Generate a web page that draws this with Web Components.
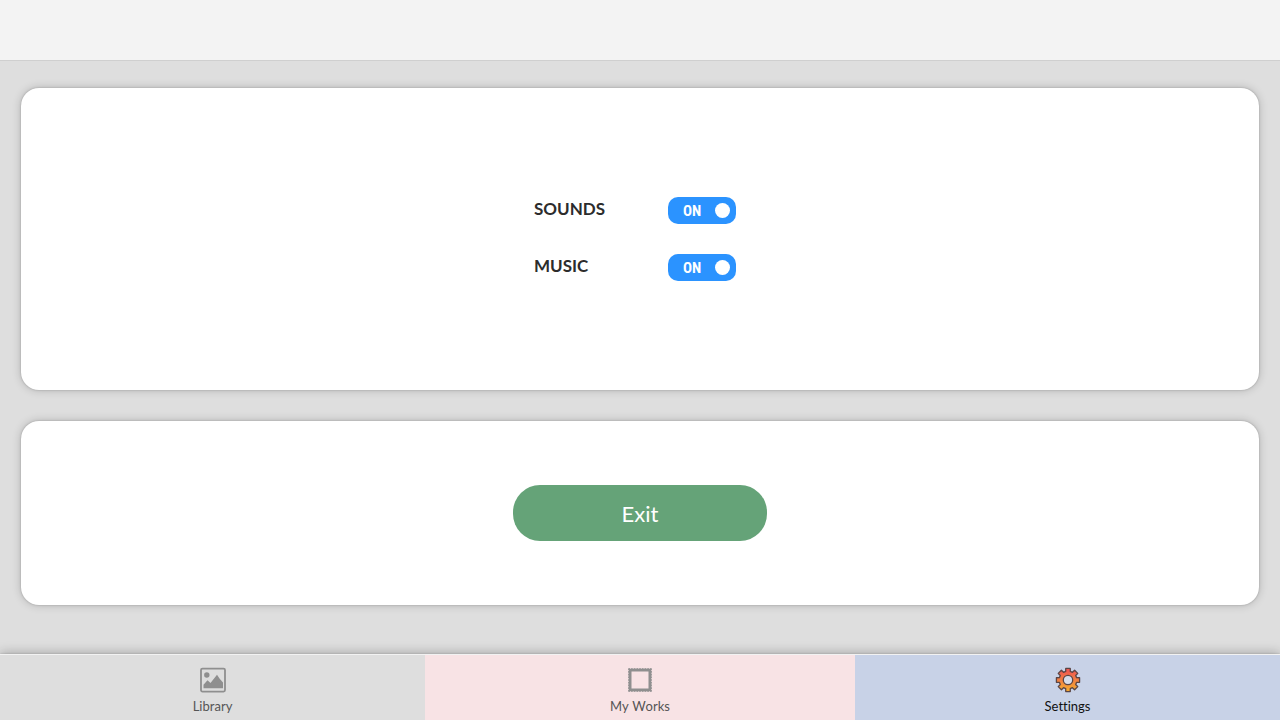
<!DOCTYPE html>
<html lang="en">
<head>
<meta charset="utf-8">
<meta name="viewport" content="width=device-width, initial-scale=1">
<title>Settings</title>
<style>
body { margin: 0; font-family: Lato, "Noto Sans", sans-serif; }
</style>
</head>
<body>
<settings-app></settings-app>
<script>
const attach = (el, html) => {
  const template = document.createElement('template');
  template.innerHTML = html;
  el.attachShadow({ mode: 'open' }).append(template.content.cloneNode(true));
};

// Outline of an eight-toothed cog centred on the origin.
const cogPath = () => {
  const profile = [[-15, 8.9], [-11, 11.8], [11, 11.8], [15, 8.9]];
  const points = [];
  for (let tooth = 0; tooth < 8; tooth++) {
    for (const [offset, radius] of profile) {
      const a = (tooth * 45 + offset - 90) * Math.PI / 180;
      points.push((Math.cos(a) * radius).toFixed(2) + ' ' + (Math.sin(a) * radius).toFixed(2));
    }
  }
  return 'M' + points.join('L') + 'Z';
};

const icons = {
  library: `<svg viewBox="0 0 26 26" aria-hidden="true">
    <rect x="1" y="1.6" width="24" height="23" rx="1.5" fill="none" stroke="#8f8f8f" stroke-width="1.8"/>
    <circle cx="6.8" cy="8" r="2.7" fill="#8f8f8f"/>
    <path d="M3.5 21.3v-3.5l4-4.5 3 2.8 6.5-8.3 2.7 4 3.3 3.8v5.7z" fill="#8f8f8f"/></svg>`,
  works: `<svg viewBox="0 0 26 26" aria-hidden="true">
    <rect x="3.1" y="3.1" width="19.8" height="19.8" fill="none" stroke="#8f8f8f" stroke-width="2.8"/>
    <path d="M1.4 1.8h23.2M1.4 24.2h23.2M1.8 1.4v23.2M24.2 1.4v23.2" fill="none" stroke="#8f8f8f" stroke-width="1.2" stroke-dasharray="1.6 1.1"/></svg>`,
  settings: `<svg viewBox="-13 -13 26 26" aria-hidden="true">
    <defs><linearGradient id="warm" x1="0" y1="0" x2="0" y2="1"><stop offset=".1" stop-color="#ee5850"/><stop offset=".9" stop-color="#f4a632"/></linearGradient></defs>
    <path d="${cogPath()}" fill="url(#warm)" stroke="#5a4545" stroke-width="1.3" stroke-linejoin="round"/>
    <circle r="4.7" fill="#d5dbea" stroke="#5a4545" stroke-width="1.3"/></svg>`
};

customElements.define('app-header', class extends HTMLElement {
  constructor() {
    super();
    attach(this, `<style>
      :host { display: block; }
      header { height: 60px; background: #f3f3f3; border-bottom: 1px solid #cfcfcf; }
    </style><header><slot></slot></header>`);
  }
});

customElements.define('panel-card', class extends HTMLElement {
  constructor() {
    super();
    attach(this, `<style>
      :host { display: flex; align-items: center; justify-content: center; box-sizing: border-box;
        background: #fff; border-radius: 18px; box-shadow: 0 0 2px rgba(0,0,0,.25), 0 0 10px rgba(0,0,0,.2); }
    </style><slot></slot>`);
  }
});

customElements.define('toggle-row', class extends HTMLElement {
  constructor() {
    super();
    attach(this, `<style>
      :host { display: block; }
      label { display: grid; grid-template-columns: 134px 68px; align-items: center; cursor: pointer; }
      .name { padding-bottom: 3px; font-size: 17px; line-height: 24px; font-weight: 700; color: #2c2c2c; }
      .switch { display: grid; align-items: center; height: 27px; border-radius: 10px; background: #999; }
      .switch:has(:checked) { background: #2b93ff; }
      input, .state { grid-area: 1 / 1; }
      input { appearance: none; display: flex; align-items: center; margin: 0; padding: 0 6px;
        height: 100%; border-radius: inherit; cursor: pointer; }
      input::before { content: ""; width: 15px; height: 15px; border-radius: 50%; background: #fff; }
      input:checked { justify-content: flex-end; }
      .state { padding-left: 15px; font: 700 15px/20px "Liberation Sans Narrow", "Roboto Condensed", Roboto, sans-serif; color: #fff; pointer-events: none; }
      input:not(:checked) + .state { padding-left: 32px; }
    </style>
    <label><span class="name"><slot></slot></span>
      <span class="switch"><input type="checkbox" role="switch" checked><span class="state" aria-hidden="true">ON</span></span></label>`);
    const input = this.shadowRoot.querySelector('input');
    input.addEventListener('change', () => {
      this.shadowRoot.querySelector('.state').textContent = input.checked ? 'ON' : 'OFF';
    });
  }
});

customElements.define('pill-button', class extends HTMLElement {
  constructor() {
    super();
    attach(this, `<style>
      :host { display: block; }
      button { width: 254px; height: 56px; padding: 2px 0 0; border: 0; border-radius: 27px;
        background: #65a378; color: #fff; font: 22px/28px Lato, "Noto Sans", sans-serif; cursor: pointer; }
    </style><button type="button"><slot></slot></button>`);
  }
});

customElements.define('nav-tab', class extends HTMLElement {
  constructor() {
    super();
    attach(this, `<style>
      :host { display: block; background: #dedede; color: #555; }
      :host([tone="rose"]) { background: #f8e3e5; }
      :host([tone="blue"]) { background: #c8d2e7; }
      :host([current]) { color: #111; }
      a { display: flex; flex-direction: column; align-items: center; gap: 4px; padding: 12px 0 5px;
        color: inherit; text-decoration: none; font-size: 13px; line-height: 18px;
        font-kerning: none; font-variant-ligatures: none; }
      svg { display: block; width: 26px; height: 26px; }
    </style><a href="#${this.getAttribute('icon')}">${icons[this.getAttribute('icon')]}<slot></slot></a>`);
  }
});

customElements.define('tab-bar', class extends HTMLElement {
  constructor() {
    super();
    attach(this, `<style>
      :host { display: block; }
      nav { display: grid; grid-template-columns: 1fr 430px 1fr; border-top: 1px solid #f2f2f2;
        box-shadow: 0 0 2px rgba(0,0,0,.2), 0 -2px 10px rgba(0,0,0,.22); }
      @media (max-width: 900px) { nav { grid-template-columns: repeat(3, 1fr); } }
    </style><nav aria-label="Main"><slot></slot></nav>`);
  }
});

customElements.define('settings-app', class extends HTMLElement {
  constructor() {
    super();
    attach(this, `<style>
      :host { display: flex; flex-direction: column; min-height: 100vh; background: #dedede; }
      main { flex: 1; display: flex; flex-direction: column; gap: 31px; padding: 27px 21px 49px; }
      .options { flex: 302 1 0; }
      .actions { flex: 184 1 0; }
      .rows { display: grid; gap: 30px; width: 212px; }
    </style>
    <app-header></app-header>
    <main>
      <panel-card class="options"><div class="rows">
        <toggle-row>SOUNDS</toggle-row>
        <toggle-row>MUSIC</toggle-row>
      </div></panel-card>
      <panel-card class="actions"><pill-button>Exit</pill-button></panel-card>
    </main>
    <tab-bar>
      <nav-tab icon="library">Library</nav-tab>
      <nav-tab icon="works" tone="rose">My Works</nav-tab>
      <nav-tab icon="settings" tone="blue" current>Settings</nav-tab>
    </tab-bar>`);
  }
});
</script>
</body>
</html>
